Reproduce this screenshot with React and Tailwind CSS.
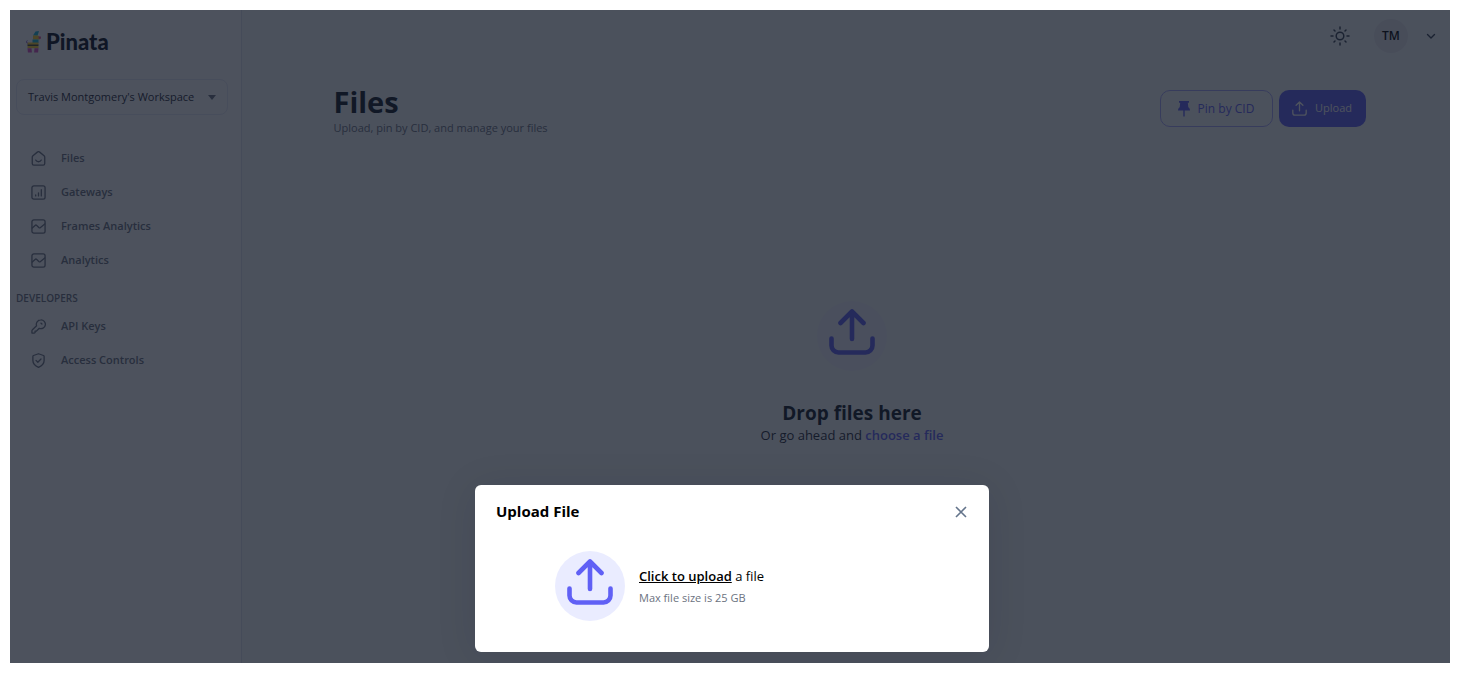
import React from "react";

const ink = "text-[#6b7280]";

function Svg({ children, className }) {
  return (
    <svg viewBox="0 0 24 24" fill="none" stroke="currentColor" strokeWidth="2.100" strokeLinecap="round" strokeLinejoin="round" className={className} aria-hidden="true">
      {children}
    </svg>
  );
}

const home = (
  <>
    <path d="M2 10a3 3 0 0 1 1.100-2.300l7-5.900a3 3 0 0 1 3.800 0l7 5.900A3 3 0 0 1 22 10v10a2.500 2.500 0 0 1-2.500 2.500h-15A2.500 2.500 0 0 1 2 20z" />
    <path d="M7.500 14.500c1.800 3.600 7.200 3.600 9 0" />
  </>
);
const bars = (
  <>
    <rect x="1.500" y="1.500" width="21" height="21" rx="3" />
    <path d="M7.500 17.500V16M12 17.500v-5M16.500 17.500v-10" />
  </>
);
const wave = (
  <>
    <rect x="1.500" y="1.500" width="21" height="21" rx="3" />
    <path d="M2 14.500l4.500-4.200a2 2 0 0 1 2.700 0l3.300 3.200a2 2 0 0 0 2.700 0L22 8" />
  </>
);
const key = (
  <>
    <path d="M15.500 1.500a7 7 0 0 0-6.600 9.300L2.300 17.300a2 2 0 0 0-.8 1.600V22.500h3.500a2 2 0 0 0 1.500-.7V19.300h2.300l4.400-4.400A7 7 0 1 0 15.500 1.500z" />
    <path d="M15.800 6.500a2 2 0 0 1 1.700 1.700" />
  </>
);
const shield = (
  <>
    <path d="M12 1.200l8 2.800a1.500 1.500 0 0 1 1 1.400V12c0 5.500-4.300 8.700-9 11-4.700-2.300-9-5.500-9-11V5.400A1.500 1.500 0 0 1 4 4z" />
    <path d="M8 11.800l2.900 2.900 5.100-5.100" />
  </>
);

function NavItem({ icon, label }) {
  return (
    <a href="#" className={`flex h-[34px] items-center gap-[15px] pl-[21px] text-[11px] font-semibold ${ink}`}>
      <Svg className="size-[15px]">{icon}</Svg>
      {label}
    </a>
  );
}

function UploadIcon({ className }) {
  return (
    <svg viewBox="0 0 46 46" fill="none" stroke="currentColor" strokeWidth="4.600" strokeLinecap="round" strokeLinejoin="round" className={className} aria-hidden="true">
      <path d="M23 30V2.500M11.500 14 23 2.500 34.500 14M2.500 29.500v7a7 7 0 0 0 7 7h27a7 7 0 0 0 7-7v-7" />
    </svg>
  );
}

function Logo() {
  return (
    <svg viewBox="0 0 15 22" className="h-[22px] w-[15px]" aria-hidden="true">
      <path d="M7 4.500 9.500.5 13 0l-1.500 4.800z" fill="#18b7d8" />
      <path d="M7 4.500h5l2.500 2-.8 2H7z" fill="#fbd02c" />
      <path d="M12.500 5.500h2.300v2.300h-2z" fill="#e5399b" />
      <path d="M6.500 8.500h6V12h-6z" fill="#18b7d8" />
      <path d="M1.500 11.500h11V14h-11z" fill="#fbd02c" />
      <path d="M1.500 13.500h11v1.500h-11z" fill="#4a4a30" />
      <path d="M1.500 15h11v2.200h-11z" fill="#fbd02c" />
      <path d="M1.500 17.200h4l.4 4.300h-4zM8.500 17.200h4l-.4 4.300h-4z" fill="#d94fc0" />
      <path d="M1.800 12.200C-.3 12 .2 9.500 1.400 9.700" fill="none" stroke="#8e5bd0" strokeWidth="1" />
    </svg>
  );
}

function Sidebar() {
  return (
    <aside className="w-[232px] shrink-0 border-r border-[#e0e2f0] bg-white">
      <div className="flex items-center gap-[5px] pl-4 pt-5">
        <Logo />
        <span className="font-[Lato] text-[22px] leading-6 font-black text-[#0b1020]">Pinata</span>
      </div>
      <button className="mt-[25px] ml-1.5 flex h-9 w-[212px] items-center justify-between rounded-lg border border-[#e8e9f5] px-[11px] text-[11px] whitespace-nowrap text-[#1f2937]">
        Travis Montgomery's Workspace
        <svg viewBox="0 0 8 5" className="h-[5px] w-2" aria-hidden="true"><path d="M0 0h8L4 5z" fill="#6b7280" /></svg>
      </button>
      <nav className="mt-[26px] flex flex-col">
        <NavItem icon={home} label="Files" />
        <NavItem icon={bars} label="Gateways" />
        <NavItem icon={wave} label="Frames Analytics" />
        <NavItem icon={wave} label="Analytics" />
        <h2 className={`pl-1.5 pt-[13px] pb-[3px] text-[10px] leading-4 font-semibold ${ink}`}>DEVELOPERS</h2>
        <NavItem icon={key} label="API Keys" />
        <NavItem icon={shield} label="Access Controls" />
      </nav>
    </aside>
  );
}

function Main() {
  return (
    <main className="flex flex-1 flex-col bg-slate-50">
      <header className="flex h-[52px] items-center justify-end pr-3.5">
        <button aria-label="Toggle theme" className="text-[#374151]">
          <svg viewBox="0 0 20 20" fill="none" stroke="currentColor" strokeWidth="1.500" strokeLinecap="round" className="size-5" aria-hidden="true">
            <circle cx="10" cy="10" r="3.800" />
            <path d="M10 1v2M10 17v2M1 10h2M17 10h2M4 4l1 1M15 15l1 1M4 16l1-1M15 5l1-1" />
          </svg>
        </button>
        <span className="ml-6 flex size-[34px] items-center justify-center rounded-full bg-[#e9eaf0] text-[12px] font-semibold text-black">TM</span>
        <button aria-label="Account menu" className="ml-[18px] text-[#374151]">
          <svg viewBox="0 0 10 10" fill="none" stroke="currentColor" strokeWidth="1.400" strokeLinecap="round" strokeLinejoin="round" className="size-2.5" aria-hidden="true"><path d="M1.500 3.500l3.500 3.500 3.500-3.500" /></svg>
        </button>
      </header>
      <div className="pl-[7px]">
        <section className="mx-auto w-full max-w-[1032px] pt-6">
          <div className="flex items-start justify-between">
            <div>
              <h1 className="text-[29px] leading-8 font-bold text-[#111827]">Files</h1>
              <p className="text-[11px] leading-5 text-[#6b7280]">Upload, pin by CID, and manage your files</p>
            </div>
            <div className="flex gap-1.5 pt-1">
              <button className="flex h-[37px] w-[113px] items-center justify-center gap-2 rounded-[10px] border border-[#a9a9fa] text-[12px] font-medium text-[#6060f5]">
                <svg viewBox="0 0 12 16" className="h-4 w-3" fill="currentColor" aria-hidden="true"><path d="M1 0h10v1.800H9.800l.5 4.500c1 .6 1.700 1.700 1.700 3.200H6.700V15L6 16l-.7-1V9.500H0c0-1.500.7-2.600 1.700-3.200l.5-4.500H1z" /></svg>
                Pin by CID
              </button>
              <button className="flex h-[37px] w-[87px] items-center justify-center gap-2 rounded-[10px] bg-[#6060f5] text-[11px] font-medium text-white">
                <svg viewBox="0 0 46 46" fill="none" stroke="currentColor" strokeWidth="4" strokeLinecap="round" strokeLinejoin="round" className="size-[15px]" aria-hidden="true">
                  <path d="M23 30V3M12.500 13 23 3l10.500 10M2.500 28v8.500a7 7 0 0 0 7 7h27a7 7 0 0 0 7-7V28" />
                </svg>
                Upload
              </button>
            </div>
          </div>
          <div className="flex flex-col items-center pt-[163px] pl-[5px]">
            <div className="flex size-[70px] justify-center rounded-full bg-[#f1f4fd] pt-2 text-[#6060f5]">
              <UploadIcon className="size-[46px]" />
            </div>
            <h2 className="mt-7 text-[19px] leading-7 font-bold text-[#111827]">Drop files here</h2>
            <p className="text-[13px] leading-4 text-[#1f2937]">
              Or go ahead and <a href="#" className="font-semibold text-[#6060f5]">choose a file</a>
            </p>
          </div>
        </section>
      </div>
    </main>
  );
}

function Dialog() {
  return (
    <div role="dialog" aria-modal="true" aria-labelledby="upload-title" className="w-[514px] rounded-md bg-white pt-4 pr-5 pb-[31px] pl-[21px] shadow-[0_4px_40px_rgba(17,24,39,0.1)]">
      <div className="flex items-center justify-between">
        <h2 id="upload-title" className="text-[15px] leading-5 font-bold text-black">Upload File</h2>
        <button aria-label="Close" className="mt-0.5 mr-0.5 text-[#64748b]">
          <svg viewBox="0 0 12 12" fill="none" stroke="currentColor" strokeWidth="1.600" className="size-3" aria-hidden="true"><path d="M1 1l10 10M11 1 1 11" /></svg>
        </button>
      </div>
      <div className="mt-[30px] flex items-center gap-3.5 pl-[59px]">
        <div className="flex size-[70px] justify-center rounded-full bg-[#eaecff] pt-2 text-[#6060f5]">
          <UploadIcon className="size-[46px]" />
        </div>
        <div>
          <p className="text-[13px] leading-6 text-black"><button className="font-semibold underline">Click to upload</button> a file</p>
          <p className="text-[11px] leading-5 text-[#6b7280]">Max file size is 25 GB</p>
        </div>
      </div>
    </div>
  );
}

export default function App() {
  return (
    <div className="min-h-screen bg-white p-2.5 font-['Open_Sans','Noto_Sans',sans-serif]">
      <div className="relative flex min-h-[calc(100vh-20px)] overflow-hidden">
        <Sidebar />
        <Main />
        <div className="absolute inset-0 flex items-end justify-center bg-[#111827]/75 pb-[11px] pl-1">
          <Dialog />
        </div>
      </div>
    </div>
  );
}
